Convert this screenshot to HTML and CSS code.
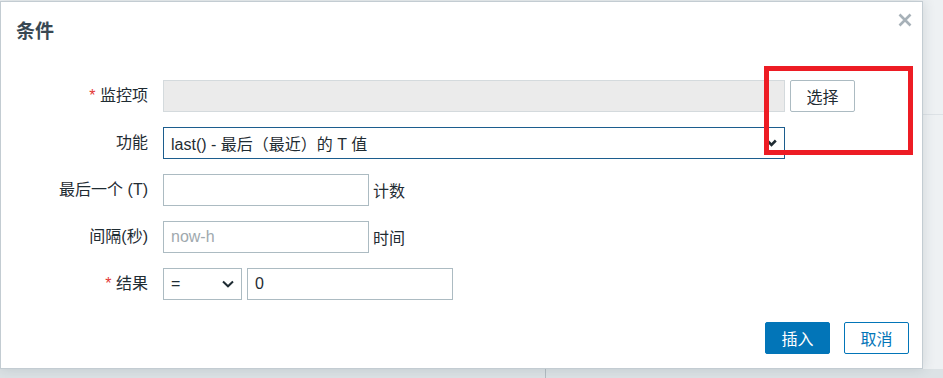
FILE: index.html
```html
<!DOCTYPE html>
<html lang="zh-CN">
<head>
    <meta charset="UTF-8">
    <title>条件</title>
    <link rel="stylesheet" href="styles.css">
</head>
<body>
    <div class="page">
        <div class="dialog">
            <div class="dialog-head">
                <h4 class="dialog-title">条件</h4>
                <button class="btn-close" type="button" title="关闭">
                    <svg width="14" height="14" viewBox="0 0 14 14"><path d="M1.5 1.5 L12.5 12.5 M12.5 1.5 L1.5 12.5" stroke="#a7b1b8" stroke-width="2.6" fill="none"/></svg>
                </button>
            </div>
            <div class="form-grid">
                <label class="form-label"><span class="required">*</span> 监控项</label>
                <div class="form-field">
                    <input class="input input-readonly input-wide" type="text" readonly>
                    <button class="btn-alt" type="button">选择</button>
                </div>

                <label class="form-label">功能</label>
                <div class="form-field">
                    <div class="select select-wide select-focus">
                        <span>last() - 最后（最近）的 T 值</span>
                        <svg width="11" height="8" viewBox="0 0 11 8"><path d="M1.2 1.5 L5.5 5.8 L9.8 1.5" stroke="#1f2c33" stroke-width="2.6" fill="none"/></svg>
                    </div>
                </div>

                <label class="form-label">最后一个 (T)</label>
                <div class="form-field">
                    <input class="input input-small" type="text">
                    <span class="field-hint">计数</span>
                </div>

                <label class="form-label">间隔(秒)</label>
                <div class="form-field">
                    <input class="input input-small" type="text" placeholder="now-h">
                    <span class="field-hint">时间</span>
                </div>

                <label class="form-label"><span class="required">*</span> 结果</label>
                <div class="form-field">
                    <div class="select select-op">
                        <span>=</span>
                        <svg width="12" height="8" viewBox="0 0 12 8"><path d="M1 1.5 L6 6.3 L11 1.5" stroke="#1f2c33" stroke-width="2" fill="none"/></svg>
                    </div>
                    <input class="input input-small" type="text" value="0">
                </div>
            </div>
            <div class="dialog-foot">
                <button class="btn" type="button">插入</button>
                <button class="btn-alt btn-cancel" type="button">取消</button>
            </div>
        </div>
        <div class="page-side">
            <div class="side-head"></div>
        </div>
    </div>
    <div class="page-foot">
        <div class="foot-cell"></div>
    </div>
    <!-- 标注框 -->
    <div class="annot"></div>
</body>
</html>
```

FILE: styles.css
```css
body {
    margin: 0;
    font-family: "Liberation Sans", "Noto Sans CJK SC", sans-serif;
    font-size: 16px;
    color: #1f2c33;
    background: #eef1f3;
    overflow: hidden;
}
.page {
    display: flex;
    align-items: flex-start;
    padding-top: 1px;
}
.dialog {
    position: relative;
    z-index: 1;
    width: 921px;
    height: 366px;
    background: #fff;
    border: 1px solid #c3ccd2;
    box-shadow: 0 0 12px rgba(40, 60, 75, 0.16);
    display: flex;
    flex-direction: column;
}
.dialog-head {
    display: flex;
    justify-content: space-between;
    align-items: flex-start;
    padding: 18px 10px 0 15px;
}
.dialog-title {
    margin: 0;
    font-size: 19px;
    line-height: 24px;
    font-weight: bold;
    color: #384853;
}
.btn-close {
    border: none;
    background: none;
    padding: 0;
    margin-top: -7px;
    width: 14px;
    height: 14px;
    cursor: pointer;
}
.form-grid {
    display: grid;
    grid-template-columns: 147px 1fr;
    column-gap: 15px;
    row-gap: 15px;
    padding-top: 36px;
}
.form-label {
    text-align: right;
    line-height: 32px;
    white-space: nowrap;
}
.required {
    color: #e33734;
}
.form-field {
    display: flex;
    align-items: center;
    gap: 5px;
}
.input {
    box-sizing: border-box;
    height: 32px;
    margin: 0;
    padding: 0 7px;
    border: 1px solid #acbbc2;
    background: #fff;
    font-family: inherit;
    font-size: 16px;
    color: #1f2c33;
    outline: none;
}
.input::placeholder {
    color: #a0a9ae;
}
.input-readonly {
    background: #ebebeb;
    border-color: #d4dadd;
}
.input-wide {
    width: 622px;
}
.input-small {
    width: 206px;
}
.field-hint {
    margin-left: -1px;
}
.select {
    box-sizing: border-box;
    height: 32px;
    display: flex;
    align-items: center;
    justify-content: space-between;
    padding: 0 7px;
    border: 1px solid #acbbc2;
    background: #fff;
}
.select-wide {
    width: 622px;
}
.select-focus {
    border-color: #1c5d8e;
}
.select-op {
    width: 79px;
}
.btn-alt {
    box-sizing: border-box;
    height: 32px;
    width: 65px;
    padding: 0;
    border: 1px solid #acbbc2;
    border-radius: 2px;
    background: #fff;
    font-family: inherit;
    font-size: 16px;
    color: #1f2c33;
}
.dialog-foot {
    margin-top: auto;
    display: flex;
    justify-content: flex-end;
    gap: 14px;
    padding: 0 13px 14px 0;
}
.btn {
    box-sizing: border-box;
    height: 32px;
    width: 65px;
    padding: 0;
    border: 1px solid #0275b8;
    border-radius: 2px;
    background: #0275b8;
    color: #fff;
    font-family: inherit;
    font-size: 16px;
}
.btn-cancel {
    border-color: #0275b8;
    color: #0275b8;
}
.page-side {
    flex: 1;
    height: 368px;
}
.side-head {
    height: 113px;
    border-bottom: 1px solid #dde2e6;
}
.page-foot {
    height: 10px;
    background: #dce2e5;
}
.foot-cell {
    width: 545px;
    height: 100%;
    border-right: 1px solid #b3bcc2;
}
.annot {
    position: absolute;
    left: 764px;
    top: 66px;
    width: 139px;
    height: 79px;
    border: 5px solid #ed1c24;
    z-index: 2;
}
```
